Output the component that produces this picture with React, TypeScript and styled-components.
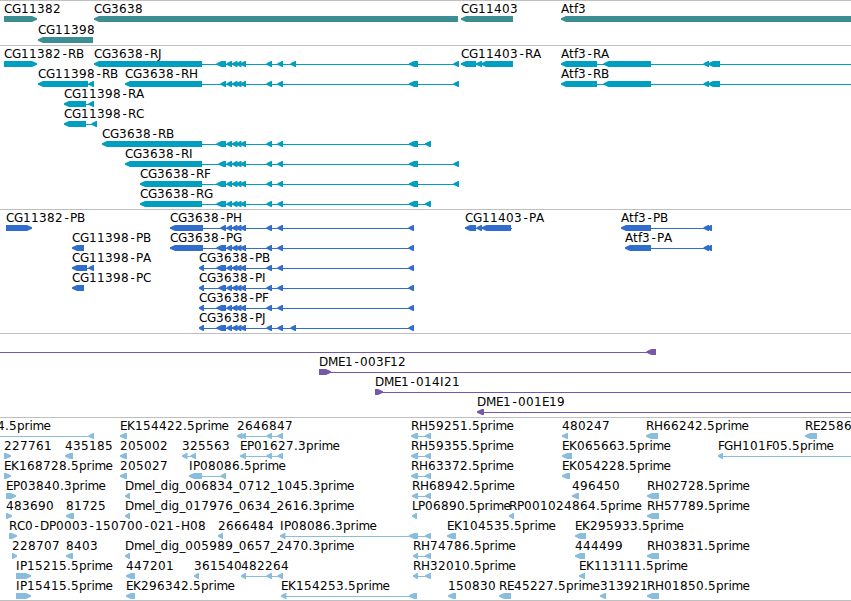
import styled, { createGlobalStyle } from 'styled-components'

type Strand = 'fwd' | 'rev'
type Block = [start: number, end: number]

interface Feature {
  name: string
  strand: Strand
  blocks: Block[]
  // extent of the connector when it runs past the blocks
  from?: number
  to?: number
}

interface TrackData {
  id: string
  color: string
  laneHeight: number
  bottomGap: number
  lanes: Feature[][]
}

const VIEW_WIDTH = 851
const OFF_VIEW = 860
const BAR_TOP = 15
const BAR_HEIGHT = 6
const BASELINE = 12
const HEAD = 5

const rev = (name: string, blocks: Block[], extent: { from?: number; to?: number } = {}): Feature => ({
  name,
  strand: 'rev',
  blocks,
  ...extent
})

const fwd = (name: string, blocks: Block[], extent: { from?: number; to?: number } = {}): Feature => ({
  name,
  strand: 'fwd',
  blocks,
  ...extent
})

// exons shared by all CG3638 isoforms
const cg3638Core: Block[] = [
  [226.5, 232],
  [232, 237.5],
  [236, 241.5],
  [240.5, 246],
  [266.5, 272],
  [277.5, 283]
]
const cg3638 = (first: Block, second: number, tail: Block[]): Block[] => [first, [second, 226], ...cg3638Core, ...tail]

const exonJ: Block = [290.5, 296]
const exonLong: Block = [409, 418]
const exonFar: Block = [453.5, 459]
const exonNear: Block = [425, 431]
const exonCds: Block = [408.5, 414]

const atf3Exons: Block[] = [
  [561, 597],
  [603.5, 651],
  [703.5, 709],
  [708, 720]
]
const estPair: Block[] = [
  [266.5, 272],
  [277.5, 283]
]

const tracks: TrackData[] = [
  {
    id: 'genes',
    color: '#3d8e94',
    laneHeight: 21,
    bottomGap: 2,
    lanes: [
      [
        fwd('CG11382', [[4, 37]]),
        rev('CG3638', [[94, 458]]),
        rev('CG11403', [[461, 513]]),
        rev('Atf3', [[561, OFF_VIEW]])
      ],
      [rev('CG11398', [[38, 93]])]
    ]
  },
  {
    id: 'transcripts',
    color: '#009fbf',
    laneHeight: 20,
    bottomGap: 3,
    lanes: [
      [
        fwd('CG11382-RB', [[4, 37]]),
        rev('CG3638-RJ', cg3638([94, 202], 216.5, [exonJ, exonLong, exonFar])),
        rev('CG11403-RA', [[461, 476], [476, 482], [481, 513]]),
        rev('Atf3-RA', atf3Exons, { to: OFF_VIEW })
      ],
      [
        rev('CG11398-RB', [[38, 88], [88.5, 94]]),
        rev('CG3638-RH', cg3638([125, 202], 220.5, [exonLong, exonFar])),
        rev('Atf3-RB', atf3Exons, { to: OFF_VIEW })
      ],
      [rev('CG11398-RA', [[64, 86], [88.5, 94]])],
      [rev('CG11398-RC', [[64, 86], [91.5, 97]])],
      [rev('CG3638-RB', cg3638([102, 202], 216.5, [exonLong, exonNear]))],
      [rev('CG3638-RI', cg3638([125, 202], 218.5, [exonLong, exonFar]))],
      [rev('CG3638-RF', cg3638([140, 202], 216.5, [exonLong, exonFar]))],
      [rev('CG3638-RG', cg3638([140, 202], 216.5, [exonLong, exonNear]))]
    ]
  },
  {
    id: 'proteins',
    color: '#306dcc',
    laneHeight: 20,
    bottomGap: 3,
    lanes: [
      [
        fwd('CG11382-PB', [[6, 32]]),
        rev('CG3638-PH', cg3638([170, 203], 220.5, [exonCds])),
        rev('CG11403-PA', [[465, 476], [476.5, 482], [481.5, 511]], { to: 512 }),
        rev('Atf3-PB', [[621, 651], [703.5, 709], [706.5, 712]])
      ],
      [
        rev('CG11398-PB', [[72, 84]]),
        rev('CG3638-PG', cg3638([170, 203], 216.5, [exonCds])),
        rev('Atf3-PA', [[625, 651], [703.5, 709], [706.5, 712]])
      ],
      [
        rev('CG11398-PA', [[72, 87], [88.5, 94]]),
        rev('CG3638-PB', cg3638([199, 204], 216.5, [exonCds]))
      ],
      [rev('CG11398-PC', [[72, 84]]), rev('CG3638-PI', cg3638([199, 204], 218.5, [exonCds]))],
      [rev('CG3638-PF', cg3638([199, 204], 216.5, [exonCds]))],
      [rev('CG3638-PJ', cg3638([199, 204], 216.5, [exonJ, exonCds]))]
    ]
  },
  {
    id: 'bacs',
    color: '#7758a8',
    laneHeight: 20,
    bottomGap: 3,
    lanes: [
      [rev('', [[646.5, 656]], { from: -10 })],
      [fwd('DME1-003F12', [[319, 331]], { to: OFF_VIEW })],
      [fwd('DME1-014I21', [[375, 383]], { to: OFF_VIEW })],
      [rev('DME1-001E19', [[477, 484]], { to: OFF_VIEW })]
    ]
  },
  {
    id: 'ests',
    color: '#88bddd',
    laneHeight: 20,
    bottomGap: 2,
    lanes: [
      [
        rev('4.5prime', [[88.5, 94]], { from: -3 }),
        rev('EK154422.5prime', [[120, 127]]),
        rev('2646847', [[237, 242.5], [240.5, 246], ...estPair]),
        rev('RH59251.5prime', [[411, 418], exonNear]),
        rev('480247', [[562, 568]]),
        rev('RH66242.5prime', [[646, 658]]),
        rev('RE2586', [[805, 817]])
      ],
      [
        fwd('227761', [[4, 11]]),
        rev('435185', [[65, 73]]),
        rev('205002', [[120, 127]]),
        rev('325563', [[182, 187.5], [190.5, 196]]),
        rev('EP01627.3prime', [[240, 246], ...estPair]),
        rev('RH59355.5prime', [[411, 418], exonNear]),
        rev('EK065663.5prime', [[562, 572]]),
        rev('FGH101F05.5prime', [[718, 723]], { to: OFF_VIEW })
      ],
      [
        fwd('EK168728.5prime', [[4, 11]]),
        rev('205027', [[120, 127]]),
        rev('IP08086.5prime', [[189, 202], [220.5, 226]]),
        rev('RH63372.5prime', [[411, 418], exonNear]),
        rev('EK054228.5prime', [[562, 570]])
      ],
      [
        fwd('EP03840.3prime', [[6, 16]]),
        rev('Dmel_dig_006834_0712_1045.3prime', [[125, 130]]),
        rev('RH68942.5prime', [[412, 418], exonNear]),
        rev('496450', [[572, 579]]),
        rev('RH02728.5prime', [[647, 659]])
      ],
      [
        fwd('483690', [[6, 12]]),
        rev('81725', [[66, 74]]),
        rev('Dmel_dig_017976_0634_2616.3prime', [[125, 130]]),
        rev('LP06890.5prime', [[412, 417]]),
        rev('RP001024864.5prime', [[509, 514]]),
        rev('RH57789.5prime', [[647, 659]])
      ],
      [
        fwd('RC0-DP0003-150700-021-H08', [[9, 17]]),
        rev('2666484', [[218, 223]]),
        rev('IP08086.3prime', [[280, 285.5], [409, 418], exonNear]),
        rev('EK104535.5prime', [[447, 456]]),
        rev('EK295933.5prime', [[575, 586]])
      ],
      [
        fwd('228707', [[12, 17]]),
        rev('8403', [[66, 73]]),
        rev('Dmel_dig_005989_0657_2470.3prime', [[125, 130]]),
        rev('RH74786.5prime', [[413, 418], exonNear]),
        rev('444499', [[575, 585]]),
        rev('RH03831.5prime', [[647, 659]])
      ],
      [
        fwd('IP15215.5prime', [[16, 31]]),
        rev('447201', [[126, 135]]),
        rev('361540', [[194, 199]]),
        rev('482264', [[241, 246], ...estPair]),
        rev('RH32010.5prime', [[413, 418], exonNear]),
        rev('EK113111.5prime', [[579, 585]])
      ],
      [
        fwd('IP15415.5prime', [[16, 31]]),
        rev('EK296342.5prime', [[126, 135]]),
        rev('EK154253.5prime', [[281, 286.5], [409, 417]]),
        rev('150830', [[448, 456]]),
        rev('RE45227.5prime', [[499, 511]]),
        rev('313921', [[600, 606]]),
        rev('RH01850.5prime', [[647, 659]])
      ]
    ]
  }
]

// advances for the label font, digits are all 8
const ADVANCE: Record<string, number> = {
  A: 8, B: 8, C: 8, D: 9, E: 7, F: 6, G: 9, H: 9, I: 4, J: 4, K: 8, L: 6, M: 10, P: 7, R: 8,
  d: 8, e: 7, f: 4, g: 8, i: 3, l: 3, m: 11, p: 7.5, r: 5, t: 5,
  '-': 7, '_': 5.6, '.': 4
}

// the hyphen glyph is narrow, keep it centred in its cell
const HYPHEN_SHIFT = 1.4

const glyphPositions = (text: string, start: number) => {
  let x = start
  return [...text]
    .map((char) => {
      const at = char === '-' ? x + HYPHEN_SHIFT : x
      x += ADVANCE[char] ?? 8
      return at
    })
    .join(' ')
}

const blockPoints = ([start, end]: Block, strand: Strand) => {
  const head = Math.min(HEAD, end - start - 1)
  const top = BAR_TOP
  const bottom = BAR_TOP + BAR_HEIGHT
  const upper = top + 2.2
  const lower = bottom - 2.2
  if (strand === 'fwd') {
    return `${start},${top} ${end - head},${top} ${end},${upper} ${end},${lower} ${end - head},${bottom} ${start},${bottom}`
  }
  return `${end},${top} ${start + head},${top} ${start},${upper} ${start},${lower} ${start + head},${bottom} ${end},${bottom}`
}

const GlobalStyle = createGlobalStyle`
  body {
    margin: 0;
    background: #ffffff;
    overflow: hidden;
  }
`

const Browser = styled.main`
  display: flex;
  flex-direction: column;
  width: ${VIEW_WIDTH}px;
  border-bottom: 1px solid #bfbfbf;
`

const Track = styled.section<{ $color: string; $gap: number }>`
  display: flex;
  flex-direction: column;
  padding-bottom: ${({ $gap }) => $gap}px;
  border-top: 1px solid #bfbfbf;
  color: ${({ $color }) => $color};
`

const Lane = styled.svg<{ $height: number }>`
  display: block;
  flex: none;
  width: 100%;
  height: ${({ $height }) => $height}px;
  overflow: visible;
`

const Label = styled.text`
  fill: #000000;
  font-family: 'DejaVu Sans', sans-serif;
  font-size: 12px;
`

const Connector = styled.rect`
  fill: currentColor;
`

const Exon = styled.polygon`
  fill: currentColor;
`

function FeatureGlyph({ feature }: { feature: Feature }) {
  const { name, strand, blocks } = feature
  const start = feature.from ?? blocks[0][0]
  const end = feature.to ?? blocks[blocks.length - 1][1]

  return (
    <g>
      {(blocks.length > 1 || feature.from !== undefined || feature.to !== undefined) && (
        <Connector x={start + 1} y={BAR_TOP + 3} width={end - start - 1} height={1} />
      )}
      {blocks.map((block) => (
        <Exon key={block[0]} points={blockPoints(block, strand)} />
      ))}
      {name && (
        <Label x={glyphPositions(name, start)} y={BASELINE}>
          {name}
        </Label>
      )}
    </g>
  )
}

export default function App() {
  return (
    <>
      <GlobalStyle />
      <Browser>
        {tracks.map((track) => (
          <Track key={track.id} $color={track.color} $gap={track.bottomGap}>
            {track.lanes.map((lane, index) => (
              <Lane key={index} $height={track.laneHeight}>
                {lane.map((feature) => (
                  <FeatureGlyph key={feature.name} feature={feature} />
                ))}
              </Lane>
            ))}
          </Track>
        ))}
      </Browser>
    </>
  )
}
